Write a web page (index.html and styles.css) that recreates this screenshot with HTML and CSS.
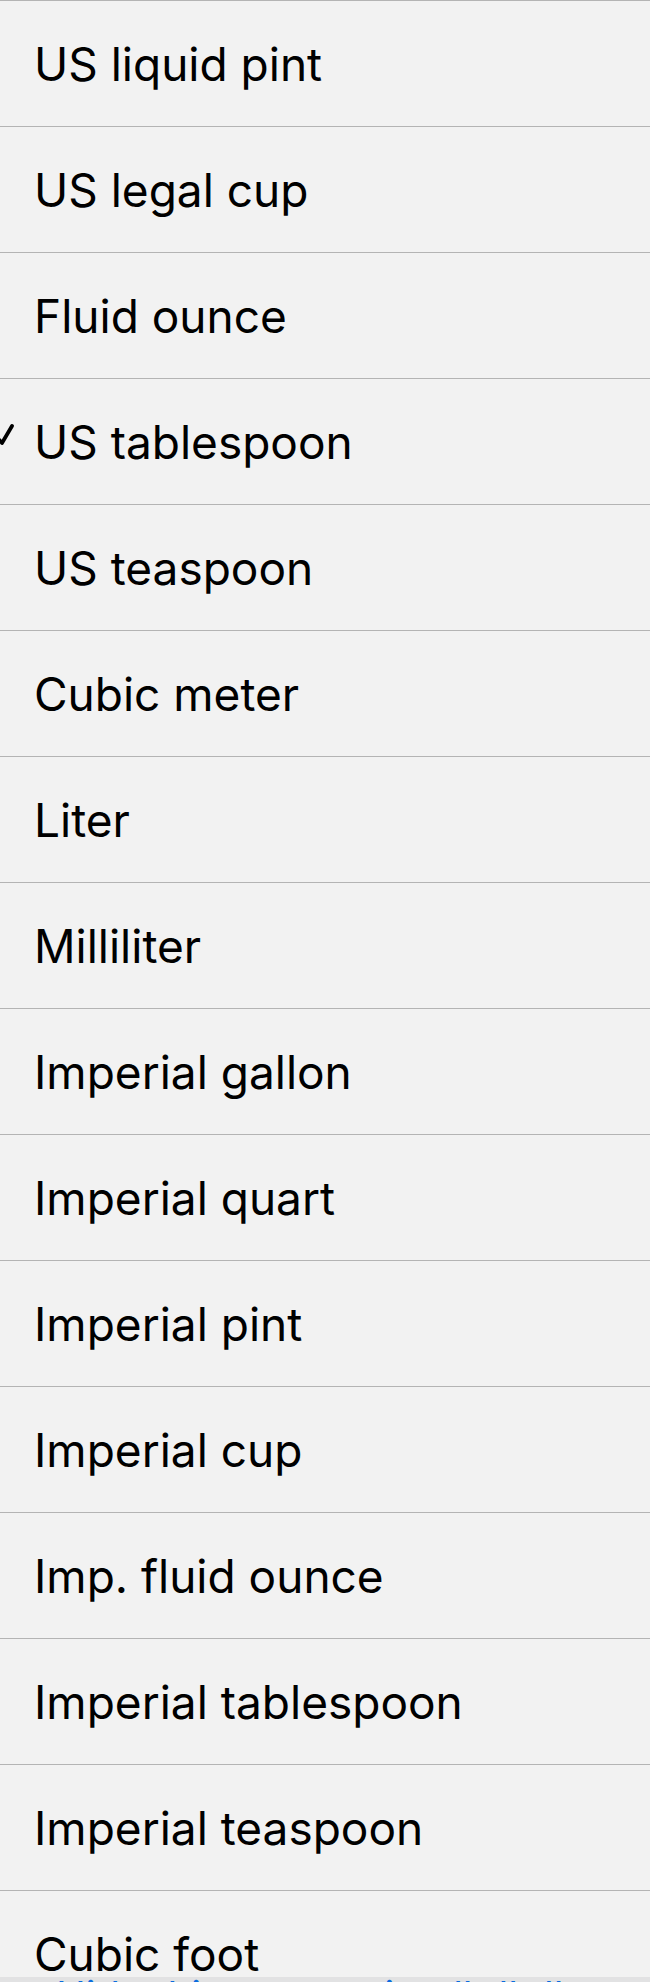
FILE: index.html
```html
<!DOCTYPE html>
<html>
<head>
<meta charset="utf-8">
<link rel="stylesheet" href="styles.css">
</head>
<body>
<div class="list">
  <div class="row"><span class="label">US liquid pint</span></div>
  <div class="row"><span class="label">US legal cup</span></div>
  <div class="row"><span class="label">Fluid ounce</span></div>
  <div class="row selected">
    <svg class="check" width="16" height="28" viewBox="0 0 16 28"><path d="M-7 12 L2 22 L12 5" fill="none" stroke="#000" stroke-width="3.8" stroke-linecap="round" stroke-linejoin="round"/></svg>
    <span class="label">US tablespoon</span></div>
  <div class="row"><span class="label">US teaspoon</span></div>
  <div class="row"><span class="label">Cubic meter</span></div>
  <div class="row"><span class="label">Liter</span></div>
  <div class="row"><span class="label">Milliliter</span></div>
  <div class="row"><span class="label">Imperial gallon</span></div>
  <div class="row"><span class="label">Imperial quart</span></div>
  <div class="row"><span class="label">Imperial pint</span></div>
  <div class="row"><span class="label">Imperial cup</span></div>
  <div class="row"><span class="label">Imp. fluid ounce</span></div>
  <div class="row"><span class="label">Imperial tablespoon</span></div>
  <div class="row"><span class="label">Imperial teaspoon</span></div>
  <div class="row"><span class="label">Cubic foot</span></div>
</div>
<div class="toolbar"><span class="toolbar-text">Hide this suggestion lb lb ll</span></div>
</body>
</html>
```
FILE: styles.css
```css
html, body {
  margin: 0;
  padding: 0;
  background: #f2f2f2;
  width: 650px;
  height: 1982px;
  overflow: hidden;
}
.list {
  border-top: 1px solid #b4b4b4;
}
.row {
  position: relative;
  height: 125px;
  border-bottom: 1px solid #b4b4b4;
  padding-left: 34px;
  display: flex;
  align-items: flex-start;
  font-family: Inter, "Noto Sans", sans-serif;
  font-size: 46px;
  color: #000;
}
.label {
  display: block;
  margin-top: 36px;
  line-height: 54px;
  letter-spacing: 0;
}
.check {
  position: absolute;
  left: 0;
  top: 42px;
}
.toolbar {
  position: fixed;
  left: 0;
  right: 0;
  bottom: 0;
  height: 5px;
  background: #e2e2e3;
  overflow: hidden;
}
.toolbar-text {
  display: block;
  margin-left: 56px;
  margin-top: -1px;
  font-family: Inter, sans-serif;
  font-size: 40px;
  line-height: 40px;
  color: #0a6cde;
}
```
